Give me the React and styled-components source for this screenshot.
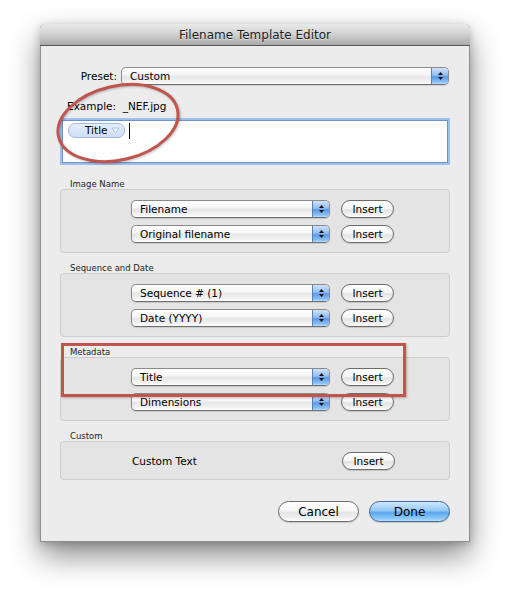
import React from 'react';
import styled, { createGlobalStyle } from 'styled-components';

const GlobalStyle = createGlobalStyle`
	html, body {
		margin: 0;
		padding: 0;
		background: #ffffff;
	}
	body {
		font-family: 'DejaVu Sans', Verdana, sans-serif;
		color: #000;
	}
`;

const Page = styled.div`
	width: 509px;
	height: 596px;
	padding: 24px 0 0 40px;
	box-sizing: border-box;
`;

const Window = styled.div`
	position: relative;
	width: 430px;
	background: #ececec;
	border: 1px solid #8e8e8e;
	border-top: none;
	border-radius: 5px 5px 0 0;
	box-sizing: border-box;
	box-shadow: 0 14px 30px rgba(0, 0, 0, 0.45), 0 2px 8px rgba(0, 0, 0, 0.2);
`;

const TitleBar = styled.div`
	height: 21px;
	margin: 0 -1px;
	display: flex;
	align-items: center;
	justify-content: center;
	font-size: 12px;
	color: #1c1c1c;
	background: linear-gradient(to bottom, #e9e9e9 0%, #d3d3d3 45%, #b6b6b6 85%, #a9a9a9 100%);
	border-bottom: 1px solid #565656;
	border-radius: 5px 5px 0 0;
	text-shadow: 0 1px 0 rgba(255, 255, 255, 0.5);
`;

const Body = styled.div`
	display: flex;
	flex-direction: column;
	padding: 0 19px 19px;
`;

const PresetRow = styled.div`
	display: flex;
	align-items: center;
	gap: 4px;
	margin-top: 21px;
	height: 18px;
`;

const FieldLabel = styled.span`
	width: 57px;
	text-align: right;
	font-size: 10.5px;
`;

const ExampleLabel = styled.div`
	margin: 14px 0 0 7px;
	font-size: 10.5px;
	line-height: 14px;
	white-space: pre;
`;

const TokenField = styled.div`
	margin-top: 5px;
	height: 47px;
	box-sizing: border-box;
	background: #fff;
	border: 2px solid #9fc0ea;
	box-shadow: inset 0 0 0 1px #6f93c8;
	padding: 3px 0 0 6px;
	display: flex;
	align-items: flex-start;
	gap: 4px;
`;

const Token = styled.span`
	display: inline-flex;
	align-items: center;
	gap: 3px;
	height: 13px;
	padding: 0 4px 0 16px;
	border-radius: 7px;
	border: 1px solid #a3b9e2;
	background: linear-gradient(to bottom, #e6eefc, #cfdef8);
	font-size: 10.5px;
	line-height: 13px;
`;

const Caret = styled.span`
	width: 1px;
	height: 16px;
	background: #000;
`;

const Section = styled.section`
	display: flex;
	flex-direction: column;
`;

const SectionLabel = styled.div`
	height: ${(p) => (p.$first ? 24 : 20)}px;
	display: flex;
	align-items: flex-end;
	padding-left: 10px;
	font-size: 8.5px;
	line-height: 10px;
	color: #222;
`;

const GroupBox = styled.div`
	display: flex;
	flex-direction: column;
	gap: 7px;
	padding: 10px 0 9px 70px;
	background: #e4e4e4;
	border: 1px solid #cdcdcd;
	border-radius: 4px;
`;

const Row = styled.div`
	display: flex;
	align-items: center;
	gap: 11px;
	height: 18px;
`;

const RowText = styled.span`
	width: 199px;
	font-size: 10.5px;
	padding-left: 1px;
`;

const PopupBox = styled.div`
	position: relative;
	display: flex;
	align-items: center;
	width: ${(p) => p.$width}px;
	height: 18px;
	box-sizing: border-box;
	border: 1px solid #8a8a8a;
	border-bottom-color: #6e6e6e;
	border-radius: 5px;
	background: linear-gradient(to bottom, #ffffff 0%, #f6f6f6 40%, #e6e6e6 55%, #f3f3f3 85%, #ffffff 100%);
	box-shadow: 0 1px 1px rgba(0, 0, 0, 0.12);
	font-size: 10.5px;
	padding-left: 8px;
	overflow: hidden;
`;

const PopupArrows = styled.span`
	position: absolute;
	right: 0;
	top: 0;
	bottom: 0;
	width: 16px;
	display: flex;
	align-items: center;
	justify-content: center;
	border-left: 1px solid #5b7fb8;
	background: linear-gradient(to bottom, #cfe2fb 0%, #93bdf2 45%, #5b97e6 55%, #8ec2f7 90%, #bfe0ff 100%);
`;

const PushButton = styled.button`
	font-family: inherit;
	font-size: ${(p) => (p.$large ? 12 : 10.5)}px;
	width: ${(p) => p.$width}px;
	height: ${(p) => (p.$large ? 21 : 18)}px;
	padding: 0;
	border-radius: 11px;
	border: 1px solid ${(p) => (p.$primary ? '#45679c' : '#6b6b6b')};
	color: #000;
	background: ${(p) =>
		p.$primary
			? 'linear-gradient(to bottom, #cfe8fd 0%, #94c8f5 45%, #5ea7ec 55%, #84c6f8 85%, #b9e2fd 100%)'
			: 'linear-gradient(to bottom, #ffffff 0%, #f7f7f7 45%, #e4e4e4 55%, #f1f1f1 85%, #ffffff 100%)'};
	box-shadow: 0 1px 1px rgba(0, 0, 0, 0.15);
`;

const Footer = styled.div`
	display: flex;
	justify-content: flex-end;
	gap: 10px;
	margin-top: 21px;
`;

const Annotation = styled.svg`
	position: absolute;
	left: 10px;
	top: 58px;
	overflow: visible;
	filter: drop-shadow(1px 1px 1px rgba(0, 0, 0, 0.25));
`;

const HighlightBox = styled.div`
	position: absolute;
	left: 20px;
	top: 319px;
	width: 345px;
	height: 54px;
	box-sizing: border-box;
	border: 3px solid #c1544c;
	box-shadow: 1px 1px 2px rgba(0, 0, 0, 0.25);
`;

const StepArrows = () => (
	<svg width="7" height="10" viewBox="0 0 7 10">
		<path d="M3.5 1 L6 4 L1 4 Z" fill="#111" />
		<path d="M3.5 9 L6 6 L1 6 Z" fill="#111" />
	</svg>
);

const Popup = ({ value, width }) => (
	<PopupBox $width={width}>
		{value}
		<PopupArrows>
			<StepArrows />
		</PopupArrows>
	</PopupBox>
);

const sections = [
	{ title: 'Image Name', rows: ['Filename', 'Original filename'] },
	{ title: 'Sequence and Date', rows: ['Sequence # (1)', 'Date (YYYY)'] },
	{ title: 'Metadata', rows: ['Title', 'Dimensions'] },
];

const App = () => (
	<Page>
		<GlobalStyle />
		<Window>
			<TitleBar>Filename Template Editor</TitleBar>
			<Body>
				<PresetRow>
					<FieldLabel>Preset:</FieldLabel>
					<Popup value="Custom" width={328} />
				</PresetRow>
				<ExampleLabel>Example:  _NEF.jpg</ExampleLabel>
				<TokenField>
					<Token>
						Title
						<svg width="9" height="7" viewBox="0 0 9 7">
							<path d="M1 1 L8 1 L4.5 6 Z" fill="#f4f7fd" stroke="#b3c3e0" strokeWidth="1" />
						</svg>
					</Token>
					<Caret />
				</TokenField>

				{sections.map((s, i) => (
					<Section key={s.title}>
						<SectionLabel $first={i === 0}>{s.title}</SectionLabel>
						<GroupBox>
							{s.rows.map((r) => (
								<Row key={r}>
									<Popup value={r} width={199} />
									<PushButton $width={53}>Insert</PushButton>
								</Row>
							))}
						</GroupBox>
					</Section>
				))}

				<Section>
					<SectionLabel>Custom</SectionLabel>
					<GroupBox>
						<Row>
							<RowText>Custom Text</RowText>
							<PushButton $width={53}>Insert</PushButton>
						</Row>
					</GroupBox>
				</Section>

				<Footer>
					<PushButton $large $width={81}>Cancel</PushButton>
					<PushButton $large $primary $width={81}>Done</PushButton>
				</Footer>
			</Body>

			{/* red annotation marks drawn over the dialog */}
			<Annotation width="140" height="88" viewBox="0 0 140 88">
				<ellipse cx="67" cy="41" rx="61" ry="37" transform="rotate(-13 67 41)" fill="none" stroke="#c1544c" strokeWidth="3" />
			</Annotation>
			<HighlightBox />
		</Window>
	</Page>
);

export default App;
